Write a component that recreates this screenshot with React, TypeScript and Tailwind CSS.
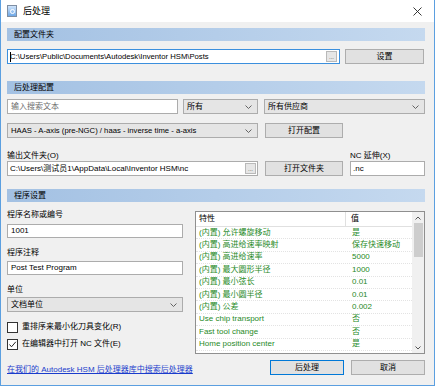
import { useState } from "react";

// small Win10-ish dialog pieces
const Header = ({ children }: { children: React.ReactNode }) => (
  <div className="h-[13px] flex items-center pl-[7px] bg-linear-to-r from-[#a3c1e3] to-[#c5d9ef] text-black">
    {children}
  </div>
);

const Chevron = () => (
  <svg width="7" height="4" viewBox="0 0 7 4" className="shrink-0">
    <polyline points="0.5,0.5 3.5,3.5 6.5,0.5" fill="none" stroke="#555" strokeWidth="0.9" />
  </svg>
);

const Dots = () => (
  <div className="w-[11px] h-[11px] border border-[#b9b9b9] bg-[#e6e6e6] flex items-end justify-center text-[6px] leading-[7px] text-[#444] shrink-0">
    ...
  </div>
);

const Select = ({ value, className = "", small = false }: { value: string; className?: string; small?: boolean }) => (
  <div className={`h-[15px] border border-[#acacac] bg-[#e5e5e5] flex items-center justify-between pl-[3px] pr-[5px] ${className}`}>
    <span className={small ? "text-[7.7px]" : ""}>{value}</span>
    <Chevron />
  </div>
);

const Button = ({ label, primary = false, className = "" }: { label: string; primary?: boolean; className?: string }) => (
  <div
    className={`h-[15px] bg-[#e1e1e1] border flex items-center justify-center ${
      primary ? "border-[#0078d7]" : "border-[#adadad]"
    } ${className}`}
  >
    {label}
  </div>
);

const Checkbox = ({ checked, label }: { checked: boolean; label: string }) => (
  <div className="flex items-center gap-[4px] h-[12px]">
    <div className="w-[11px] h-[11px] border border-[#333] bg-white flex items-center justify-center">
      {checked && (
        <svg width="9" height="9" viewBox="0 0 9 9">
          <polyline points="1.5,4.5 3.5,6.8 7.8,1.8" fill="none" stroke="#222" strokeWidth="1" />
        </svg>
      )}
    </div>
    <span>{label}</span>
  </div>
);

const props = [
  ["(内置) 允许螺旋移动", "是"],
  ["(内置) 高进给速率映射", "保存快速移动"],
  ["(内置) 高进给速率", "5000"],
  ["(内置) 最大圆形半径", "1000"],
  ["(内置) 最小弦长", "0.01"],
  ["(内置) 最小圆半径", "0.01"],
  ["(内置) 公差", "0.002"],
  ["Use chip transport", "否"],
  ["Fast tool change", "否"],
  ["Home position center", "是"],
];

export default function App() {
  const [openInEditor, setOpenInEditor] = useState(true);

  return (
    <div className="w-[435px] h-[386px] bg-[#f0f0f0] border-x border-b border-[#5b9fe0] flex flex-col text-[8px] leading-none text-black font-['Liberation_Sans','Noto_Sans_CJK_SC',sans-serif] overflow-hidden">
      {/* title bar */}
      <div className="h-[22px] bg-white flex items-center justify-between pl-[6px] pr-[12px] shrink-0">
        <div className="flex items-center gap-[6px]">
          <div className="w-[10px] h-[12px] border border-[#7e8ea3] bg-linear-to-b from-[#cfe4fb] to-[#6fa8e6] flex items-center justify-center">
            <div className="w-[5px] h-[5px] rounded-full border border-white" />
          </div>
          <span className="text-[9px]">后处理</span>
        </div>
        <svg width="9" height="9" viewBox="0 0 9 9">
          <path d="M0.5 0.5 L8.5 8.5 M8.5 0.5 L0.5 8.5" stroke="#222" strokeWidth="0.9" />
        </svg>
      </div>

      <div className="flex-1 flex flex-col pl-[6px] pr-[9px] pt-[6px]">
        {/* 配置文件夹 */}
        <Header>配置文件夹</Header>
        <div className="flex gap-[5px] mt-[8px]">
          <div className="w-[333px] h-[15px] border border-[#3b8fdd] bg-white flex items-center justify-between pl-[2px] pr-[2px]">
            <span className="flex items-center text-[7.7px]">
              <span className="w-px h-[10px] bg-black -mr-px" />
              C:\Users\Public\Documents\Autodesk\Inventor HSM\Posts
            </span>
            <Dots />
          </div>
          <Button label="设置" className="w-[79px]" />
        </div>

        {/* 后处理配置 */}
        <div className="mt-[17px]">
          <Header>后处理配置</Header>
        </div>
        <div className="flex mt-[5px]">
          <div className="w-[171px] h-[15px] border border-[#acacac] bg-white flex items-center pl-[3px] text-[#6d6d6d]">
            输入搜索文本
          </div>
          <Select value="所有" className="w-[75px] ml-[5px]" />
          <Select value="所有供应商" className="w-[161px] ml-[6px]" />
        </div>
        <div className="flex mt-[9px]">
          <Select small value="HAAS - A-axis (pre-NGC) / haas - inverse time - a-axis" className="w-[251px]" />
          <Button label="打开配置" className="w-[78px] ml-[7px]" />
        </div>
        <div className="flex mt-[12px] items-end">
          <div className="w-[251px]">
            <div className="h-[11px] flex items-center">输出文件夹(O)</div>
            <div className="h-[15px] border border-[#acacac] bg-white flex items-center justify-between pl-[2px] pr-[1px]">
              <span>C:\Users\测试员1\AppData\Local\Inventor HSM\nc</span>
              <Dots />
            </div>
          </div>
          <Button label="打开文件夹" className="w-[78px] ml-[7px]" />
          <div className="w-[75px] ml-[7px]">
            <div className="h-[11px] flex items-center">NC 延伸(X)</div>
            <div className="h-[15px] border border-[#acacac] bg-white flex items-center pl-[2px]">.nc</div>
          </div>
        </div>

        {/* 程序设置 */}
        <div className="mt-[13px]">
          <Header>程序设置</Header>
        </div>
        <div className="flex mt-[9px]">
          <div className="w-[176px] flex flex-col">
            <div className="h-[11px] mt-[-2px] flex items-center">程序名称或编号</div>
            <div className="h-[14px] mt-[4px] border border-[#acacac] bg-white flex items-center pl-[3px]">1001</div>
            <div className="h-[11px] mt-[9px] flex items-center">程序注释</div>
            <div className="h-[14px] mt-[3px] border border-[#acacac] bg-white flex items-center pl-[3px]">Post Test Program</div>
            <div className="h-[11px] mt-[9px] flex items-center">单位</div>
            <Select value="文档单位" className="mt-[2px]" />
            <div className="mt-[9px]">
              <Checkbox checked={false} label="重排序来最小化刀具变化(R)" />
            </div>
            <div className="mt-[5px]" onClick={() => setOpenInEditor(!openInEditor)}>
              <Checkbox checked={openInEditor} label="在编辑器中打开 NC 文件(E)" />
            </div>
          </div>

          {/* property grid */}
          <div className="w-[230px] h-[143px] ml-[12px] border border-[#8f8f8f] bg-white flex">
            <div className="flex-1 flex flex-col">
              <div className="h-[15px] flex border-b border-[#e0e0e0]">
                <div className="w-[150px] pl-[3px] flex items-center border-r border-[#e0e0e0]">特性</div>
                <div className="flex-1 pl-[5px] flex items-center">值</div>
              </div>
              {props.map(([name, val]) => (
                <div key={name} className="h-[12.4px] flex border-b border-dotted border-[#e3e3e3] text-[#1f8a1f]">
                  <div className="w-[150px] pl-[3px] flex items-center">{name}</div>
                  <div className="flex-1 pl-[6px] flex items-center">{val}</div>
                </div>
              ))}
            </div>
            <div className="w-[12px] bg-[#f0f0f0] flex flex-col items-center">
              <div className="h-[11px] flex items-center">
                <svg width="6" height="4" viewBox="0 0 6 4">
                  <polyline points="0.5,3.5 3,1 5.5,3.5" fill="none" stroke="#555" strokeWidth="1" />
                </svg>
              </div>
              <div className="w-[9px] h-[34px] bg-[#cdcdcd]" />
              <div className="flex-1" />
              <div className="h-[11px] flex items-center">
                <svg width="6" height="4" viewBox="0 0 6 4">
                  <polyline points="0.5,0.5 3,3 5.5,0.5" fill="none" stroke="#555" strokeWidth="1" />
                </svg>
              </div>
            </div>
          </div>
        </div>

        {/* bottom */}
        <div className="flex items-center mt-[6px]">
          <span className="text-[#1a3ccc] underline flex-1 mt-[4px]">在我们的 Autodesk HSM 后处理器库中搜索后处理器</span>
          <Button label="后处理" primary className="w-[74px]" />
          <Button label="取消" className="w-[74px] ml-[7px]" />
        </div>
      </div>
    </div>
  );
}
